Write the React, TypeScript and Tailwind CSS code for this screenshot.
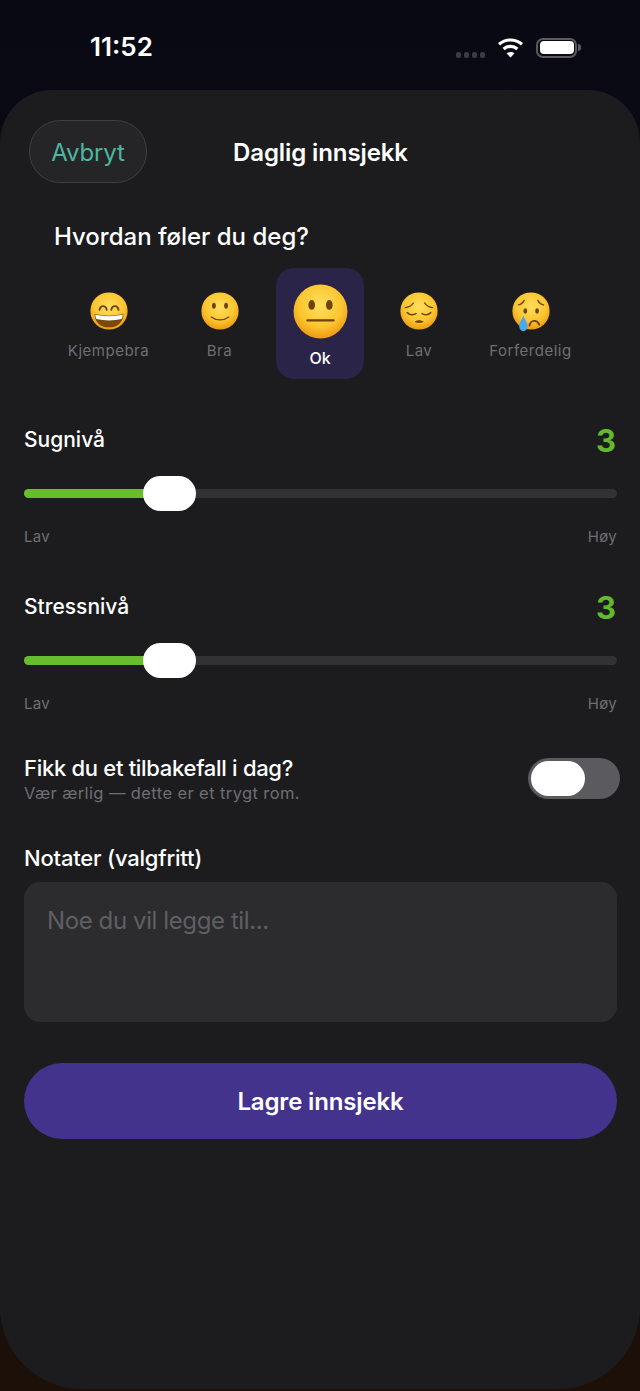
const font = { fontFamily: "Inter, 'Noto Sans', sans-serif" };

function Face({ id, size, children }: { id: string; size: number; children: React.ReactNode }) {
  return (
    <svg width={size} height={size} viewBox="0 0 100 100" className="overflow-visible">
      <defs>
        <radialGradient id={id} cx="50%" cy="38%" r="62%">
          <stop offset="0%" stopColor="#ffdf5e" />
          <stop offset="65%" stopColor="#fbc52f" />
          <stop offset="100%" stopColor="#ee9a12" />
        </radialGradient>
      </defs>
      <circle cx="50" cy="50" r="49" fill={`url(#${id})`} />
      {children}
    </svg>
  );
}

const ink = "#6e4208";

function Grin() {
  return (
    <Face id="grin" size={38}>
      <path d="M25 47c2-13 17-13 19 0M56 47c2-13 17-13 19 0" fill="none" stroke={ink} strokeWidth="5" strokeLinecap="round" />
      <path d="M12 57c24 7 52 7 76 0 0 21-14 36-38 36S12 78 12 57z" fill="#7a4a0c" />
      <path d="M14 59c22 6 50 6 72 0 0 5-1 9-3 12-20 5-46 5-66 0-2-3-3-7-3-12z" fill="#fff" />
    </Face>
  );
}

function Smile() {
  return (
    <Face id="smile" size={38}>
      <ellipse cx="34" cy="36" rx="5" ry="8" fill={ink} />
      <ellipse cx="66" cy="36" rx="5" ry="8" fill={ink} />
      <path d="M27 66c13 10 33 10 46 0" fill="none" stroke={ink} strokeWidth="3.5" strokeLinecap="round" />
    </Face>
  );
}

function Neutral() {
  return (
    <Face id="neutral" size={55}>
      <ellipse cx="34" cy="38" rx="6" ry="9" fill={ink} />
      <ellipse cx="66" cy="38" rx="6" ry="9" fill={ink} />
      <rect x="24" y="64" width="52" height="4" rx="2" fill={ink} />
    </Face>
  );
}

function Pensive() {
  return (
    <Face id="pensive" size={38}>
      <path d="M14 41c8-1 16-5 21-12M86 41c-8-1-16-5-21-12" fill="none" stroke={ink} strokeWidth="3.5" strokeLinecap="round" />
      <path d="M19 54c5 7 17 7 23 3M81 54c-5 7-17 7-23 3" fill="none" stroke={ink} strokeWidth="4" strokeLinecap="round" />
      <path d="M41 78c6-3 13-3 19 0-6 2-13 2-19 0z" fill={ink} stroke={ink} strokeWidth="3" strokeLinejoin="round" />
    </Face>
  );
}

function Crying() {
  return (
    <Face id="crying" size={38}>
      <path d="M17 34c6-1 12-6 15-12M83 34c-6-1-12-6-15-12" fill="none" stroke={ink} strokeWidth="3.5" strokeLinecap="round" />
      <ellipse cx="35" cy="50" rx="5" ry="7" fill={ink} />
      <ellipse cx="66" cy="50" rx="5" ry="7" fill={ink} />
      <path d="M46 88c4-15 19-16 26-2" fill="none" stroke={ink} strokeWidth="5" strokeLinecap="round" />
      <path d="M30 62c4 11 11 18 11 28 0 8-5 13-11 13s-11-5-11-13c0-10 7-17 11-28z" fill="#4aa8ec" />
    </Face>
  );
}

function Wifi() {
  return (
    <svg width="27" height="21" viewBox="0 0 27 21" fill="none" stroke="#fff" strokeWidth="3.2">
      <path d="M2 7.2c6.6-5.6 16.4-5.6 23 0" />
      <path d="M6.6 12c4-3.4 9.8-3.4 13.8 0" />
      <path d="M13.5 20.5l-4-4.2c2.3-1.9 5.7-1.9 8 0z" fill="#fff" stroke="none" />
    </svg>
  );
}

function Mood({ label, width, children }: { label: string; width: string; children: React.ReactNode }) {
  return (
    <div className={`flex flex-col items-center pt-[24px] ${width}`}>
      <div className="flex h-[38px] items-center">{children}</div>
      <span className="mt-[11px] text-[15px] leading-5 tracking-[0.5px] text-[#6e6e73]">{label}</span>
    </div>
  );
}

function Slider({ label }: { label: string }) {
  return (
    <div className="mt-[40px]">
      <div className="flex h-10 items-center justify-between pt-[2px]">
        <span className="text-[21px] font-medium text-white">{label}</span>
        <span className="mr-[1px] mt-[2px] text-[31px] font-bold text-[#63b92d]">3</span>
      </div>
      <div className="relative mt-[17px] flex h-[35px] items-center">
        <div className="h-[9px] w-full rounded-full bg-[#323234]">
          <div className="h-full w-[125px] rounded-full bg-[#66bd2e]" />
        </div>
        <div className="absolute left-[119px] top-0 h-[35px] w-[53px] rounded-[18px] bg-white" />
      </div>
      <div className="mt-[16px] flex justify-between text-[15px] leading-[19px] tracking-[0.3px] text-[#6e6e73]">
        <span>Lav</span>
        <span>Høy</span>
      </div>
    </div>
  );
}

export default function App() {
  return (
    <div style={font} className="flex h-[1391px] w-[640px] flex-col overflow-hidden bg-gradient-to-b from-[#090914] via-[#0c0a10] to-[#1c1008]">
      <div className="flex h-[90px] shrink-0 items-start justify-between pl-[90px] pr-[59px] pt-[31px]">
        <span className="text-[26px] font-semibold leading-8 text-white">11:52</span>
        <div className="flex items-center pt-[6px]">
          <div className="mt-[14px] flex gap-[3px]">
            <span className="h-[6px] w-[5px] rounded-[2px] bg-[#3b3b44]" />
            <span className="h-[6px] w-[5px] rounded-[2px] bg-[#3b3b44]" />
            <span className="h-[6px] w-[5px] rounded-[2px] bg-[#3b3b44]" />
            <span className="h-[6px] w-[5px] rounded-[2px] bg-[#3b3b44]" />
          </div>
          <div className="ml-[12px]">
            <Wifi />
          </div>
          <div className="ml-[12px] flex items-center">
            <div className="flex h-[20px] w-[41px] items-center rounded-[7px] border-2 border-[#5a5a60] p-[1.5px]">
              <div className="h-full w-full rounded-[4px] bg-white" />
            </div>
            <div className="ml-[1px] h-[7px] w-[3px] rounded-r-full bg-[#5a5a60]" />
          </div>
        </div>
      </div>

      <div className="h-[1299px] shrink-0 rounded-t-[52px] rounded-b-[82px] bg-[#1c1c1e] pl-6 pr-[23px] pt-[30px]">
        <div className="grid grid-cols-[1fr_auto_1fr] items-center">
          <button className="ml-[5px] h-[63px] w-[118px] rounded-[31px] border border-[#3e3e41] bg-[#252527] pt-[2px] text-[24px] tracking-[-0.1px] text-[#4db5a1]">
            Avbryt
          </button>
          <h1 className="mt-[2px] text-[24px] font-semibold tracking-[-0.1px] text-white">Daglig innsjekk</h1>
          <div />
        </div>

        <h2 className="mt-[39px] pl-[30px] text-[24px] font-medium leading-[30px] text-white">Hvordan føler du deg?</h2>

        <div className="-ml-6 mt-[16px] flex h-[111px] items-start pl-[46px]">
          <Mood label="Kjempebra" width="w-[125px]"><Grin /></Mood>
          <div className="ml-[14px]">
            <Mood label="Bra" width="w-[69px]"><Smile /></Mood>
          </div>
          <div className="ml-[22px] flex h-[111px] w-[88px] flex-col items-center rounded-[18px] bg-[#2a2548] pt-[16px]">
            <Neutral />
            <span className="mt-[9px] text-[16px] font-medium leading-5 text-white">Ok</span>
          </div>
          <div className="ml-[20px]">
            <Mood label="Lav" width="w-[70px]"><Pensive /></Mood>
          </div>
          <div className="ml-[13px]">
            <Mood label="Forferdelig" width="w-[127px]"><Crying /></Mood>
          </div>
        </div>

        <Slider label="Sugnivå" />
        <Slider label="Stressnivå" />

        <div className="mt-[41px] flex h-[50px] items-start justify-between">
          <div className="pt-[1px]">
            <p className="text-[22px] font-medium leading-[26px] tracking-[-0.3px] text-white">Fikk du et tilbakefall i dag?</p>
            <p className="mt-[1px] text-[16.5px] leading-[22px] tracking-[0.4px] text-[#6e6e73]">Vær ærlig — dette er et trygt rom.</p>
          </div>
          <div className="-mr-[3px] mt-[4px] flex h-[41px] w-[92px] items-center rounded-full bg-[#5a5a5f] px-[3px]">
            <div className="h-[35px] w-[54px] rounded-[18px] bg-white" />
          </div>
        </div>

        <p className="mt-[41px] text-[22px] font-medium leading-[26px] tracking-[-0.2px] text-white">Notater (valgfritt)</p>
        <textarea
          placeholder="Noe du vil legge til..."
          className="mt-[11px] block h-[140px] w-full resize-none rounded-[16px] bg-[#2c2c2e] px-[23px] pt-[24px] text-[24px] leading-[30px] tracking-[-0.4px] outline-none placeholder:text-[#5f5f63]"
        />

        <button className="mt-[41px] h-[76px] w-full rounded-full bg-[#43338c] pt-[2px] text-[24px] font-semibold tracking-[-0.15px] text-white">
          Lagre innsjekk
        </button>
      </div>
    </div>
  );
}
